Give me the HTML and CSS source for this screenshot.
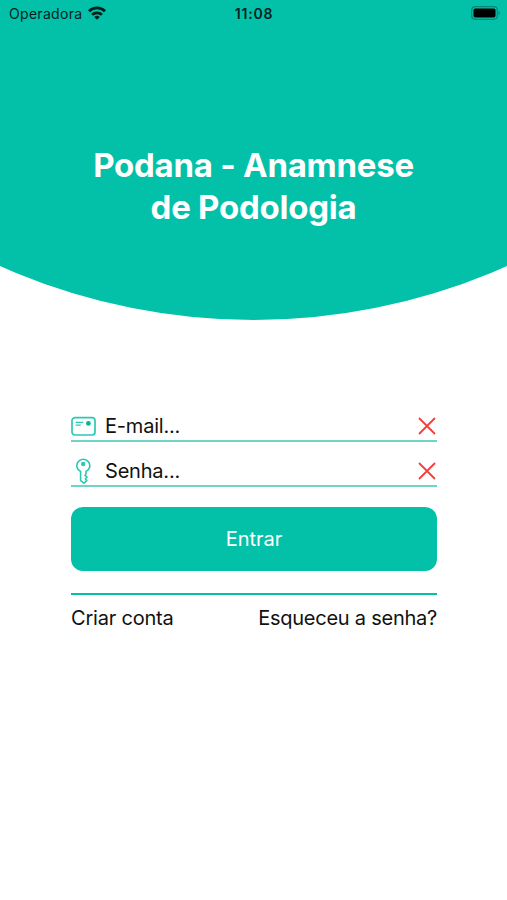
FILE: index.html
```
<!DOCTYPE html>
<html lang="pt-BR">
<head>
  <meta charset="UTF-8" />
  <meta name="viewport" content="width=device-width, initial-scale=1.0" />
  <title>Podana - Anamnese de Podologia</title>
  <link rel="stylesheet" href="styles.css">
</head>
<body>
  <header>
    <div class="status">
      <div class="carrier">
        <span>Operadora</span>
        <svg class="wifi" viewBox="0 0 18 14" fill="none" stroke="#03211e" stroke-width="2.8">
          <path d="M1 5.2a11.4 11.4 0 0 1 16 0" />
          <path d="M4 8.8a7.2 7.2 0 0 1 10 0" />
          <path d="M9 13.8L6.2 11a4 4 0 0 1 5.6 0z" fill="#03211e" stroke="none" />
        </svg>
      </div>
      <span class="time">11:08</span>
      <svg class="battery" viewBox="0 0 30 14">
        <rect x="0.7" y="0.7" width="25.6" height="12.6" rx="3.5" fill="none" stroke="#038574" stroke-width="1.2" />
        <rect x="2.5" y="2.5" width="22" height="9" rx="1.8" fill="#000" />
        <path d="M27.6 5v4a2.2 2.2 0 0 0 0-4z" fill="#038574" />
      </svg>
    </div>
    <h1>Podana - Anamnese<br>de Podologia</h1>
  </header>

  <main>
    <form>
      <label class="field">
        <svg class="icon" viewBox="0 0 26 26" fill="none" stroke="#2cc8b4" stroke-width="1.7">
          <rect x="1" y="4.6" width="23" height="17.4" rx="3" />
          <path d="M4.6 9.4h7.6M4.6 12.2h5.2" stroke-width="1.3" />
          <circle cx="17.4" cy="10.4" r="2.4" fill="#03b79f" stroke="none" />
        </svg>
        <input type="text" placeholder="E-mail...">
        <svg class="clear" viewBox="0 0 18 18"><path d="M1 1l16 16M17 1L1 17" /></svg>
      </label>
      <label class="field">
        <svg class="icon" viewBox="0 0 26 26" fill="none" stroke="#2cc8b4" stroke-width="1.6" stroke-linejoin="round">
          <path d="M9.6 13.6a6.5 6.5 0 1 1 5.4 0v2.2l-1 1.6 2 1.8-1.6 1.6 1.4 1.8-2.8 2.6-3.4-2.6z" />
          <circle cx="12.2" cy="6" r="1.4" fill="#2cc8b4" />
        </svg>
        <input type="password" placeholder="Senha...">
        <svg class="clear" viewBox="0 0 18 18"><path d="M1 1l16 16M17 1L1 17" /></svg>
      </label>
      <button type="button" class="entrar">Entrar</button>
    </form>

    <nav class="links">
      <a href="#">Criar conta</a>
      <a href="#" class="esqueceu">Esqueceu a senha?</a>
    </nav>
  </main>
</body>
</html>
```
FILE: styles.css
```
body {
  margin: 0;
  font-family: Inter, Roboto, sans-serif;
  background-color: white;
  color: #111;
}

header {
  height: 320px;
  background-color: #03c1a9;
  clip-path: circle(622px at 50% -302px);
}

.status {
  display: grid;
  grid-template-columns: 1fr auto 1fr;
  align-items: center;
  height: 26px;
  padding: 0 6px 0 9px;
  font-size: 14px;
  color: #03211e;
}

.carrier {
  display: flex;
  align-items: center;
  gap: 6px;
  letter-spacing: 0.3px;
}

.wifi {
  width: 18px;
  height: 14px;
}

.time {
  margin-right: 2px;
  font-weight: 600;
  letter-spacing: 0.8px;
}

.battery {
  width: 30px;
  height: 14px;
  justify-self: end;
}

h1 {
  margin: 118px 0 0;
  font-size: 33px;
  line-height: 42px;
  font-weight: 700;
  letter-spacing: -0.25px;
  text-align: center;
  color: white;
}

main {
  width: 366px;
  margin: 91px 70px 0 71px;
}

.field {
  display: flex;
  align-items: center;
  height: 29px;
  border-bottom: 2px solid #6fd3c5;
  margin-bottom: 14px;
}

.icon {
  width: 26px;
  height: 26px;
}

.field input {
  flex: 1;
  min-width: 0;
  margin: 0 0 0 8px;
  padding: 0;
  border: none;
  outline: none;
  background: none;
  font-family: inherit;
  font-size: 20px;
  letter-spacing: -0.2px;
}

.field input::placeholder {
  color: #111;
}

.clear {
  width: 18px;
  height: 18px;
  margin-right: 1px;
  fill: none;
  stroke: #f33f3a;
  stroke-width: 1.8;
}

.entrar {
  display: block;
  width: 100%;
  height: 64px;
  margin-top: 20px;
  border: none;
  border-radius: 12px;
  background-color: #03c1a9;
  color: white;
  font-family: inherit;
  font-size: 20px;
}

.links {
  display: flex;
  justify-content: space-between;
  margin-top: 22px;
  padding-top: 9px;
  border-top: 2px solid #03c1a9;
  font-size: 20px;
  line-height: 28px;
  letter-spacing: -0.2px;
}

.links a {
  color: #111;
  text-decoration: none;
}

.links .esqueceu {
  letter-spacing: -0.25px;
}
```
